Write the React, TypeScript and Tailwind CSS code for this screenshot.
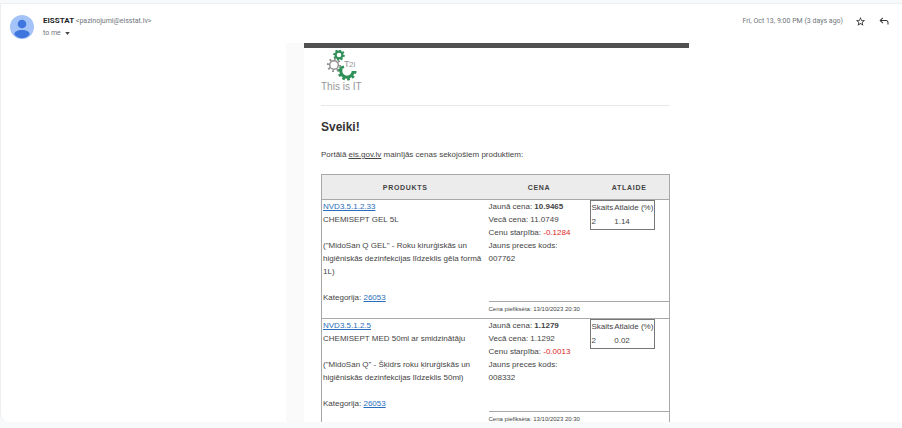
import type { ReactNode } from "react";

type Product = {
  code: string;
  name: string;
  description: string;
  category: string;
  newPrice: string;
  oldPrice: string;
  diff: string;
  itemCode: string;
  discount: string;
};

const products: Product[] = [
  {
    code: "NVD3.5.1.2.33",
    name: "CHEMISEPT GEL 5L",
    description: '("MidoSan Q GEL" - Roku ķirurģiskās un higiēniskās dezinfekcijas līdzeklis gēla formā 1L)',
    category: "26053",
    newPrice: "10.9465",
    oldPrice: "11.0749",
    diff: "-0.1284",
    itemCode: "007762",
    discount: "1.14",
  },
  {
    code: "NVD3.5.1.2.5",
    name: "CHEMISEPT MED 50ml ar smidzinātāju",
    description: '("MidoSan Q" - Šķidrs roku ķirurģiskās un higiēniskās dezinfekcijas līdzeklis 50ml)',
    category: "26053",
    newPrice: "1.1279",
    oldPrice: "1.1292",
    diff: "-0.0013",
    itemCode: "008332",
    discount: "0.02",
  },
];

function Avatar() {
  return (
    <svg viewBox="0 0 24 24" className="size-6 shrink-0" aria-hidden="true">
      <circle cx="12" cy="12" r="12" fill="#a4c3f8" />
      <circle cx="12" cy="9" r="4.3" fill="#3f76dd" />
      <path d="M4.3 19.4c0-2.8 3.2-4.5 7.7-4.5s7.7 1.7 7.7 4.5c-1.9 2.4-4.7 3.8-7.7 3.8s-5.8-1.4-7.7-3.8z" fill="#3f76dd" />
    </svg>
  );
}

function Logo() {
  return (
    <svg viewBox="0 0 42 42" className="block h-[42px] w-[42px]" role="img" aria-label="T2i This is IT">
      <g fill="none" stroke="#2f9058">
        <circle cx="18" cy="5" r="3.4" strokeWidth="2.2" />
        <circle cx="18" cy="5" r="4.9" strokeWidth="1.8" pathLength="160" strokeDasharray="11 9" />
        {/* open gear, lower part only */}
        <circle cx="26" cy="21" r="6.2" strokeWidth="3" pathLength="360" strokeDasharray="205 155" />
        <circle cx="26" cy="21" r="8.2" strokeWidth="2.6" pathLength="360" strokeDasharray="19 16 19 16 19 16 19 16 19 16 19 166" />
        <path d="M18.5 18.2l4.5-1.4" strokeWidth="2.6" />
      </g>
      <g fill="none" stroke="#919191">
        <circle cx="13" cy="15" r="4.3" strokeWidth="1.5" />
        <circle cx="13" cy="15" r="6" strokeWidth="2.2" pathLength="160" strokeDasharray="8 12" />
      </g>
      <g fill="#979797" fontFamily="'Liberation Sans', Arial, sans-serif">
        <text x="23" y="17" fontSize="9">T</text>
        <text x="28" y="17" fontSize="8">2i</text>
        <text x="0" y="40" fontSize="10">This is IT</text>
      </g>
    </svg>
  );
}

function MailLink({ children }: { children: ReactNode }) {
  return (
    <a href="#" className="text-[#2a6ebb] underline">
      {children}
    </a>
  );
}

function MessageHeader() {
  return (
    <header className="flex items-start gap-[9px] pt-[11px] pr-3 pl-[9px] font-['Roboto',sans-serif] text-[#70757a]">
      <Avatar />
      <div className="flex-1 text-[7px] leading-3">
        <div>
          <span className="text-[8px] font-bold text-[#1f1f1f]">EISSTAT</span>{" "}
          <span>&lt;pazinojumi@eisstat.lv&gt;</span>
        </div>
        <button type="button" className="flex items-center gap-1">
          to me
          <svg viewBox="0 0 6 4" className="h-[3px] w-[5px] fill-[#444746]" aria-hidden="true">
            <path d="M0 0h6L3 4z" />
          </svg>
        </button>
      </div>
      <div className="flex items-center text-[7px] leading-3">
        <span>Fri, Oct 13, 9:00 PM (3 days ago)</span>
        <button type="button" aria-label="Star" className="ml-3">
          <svg viewBox="0 0 24 24" className="size-[11px] fill-[#333333]">
            <path d="M22 9.240l-7.190-.620L12 2 9.190 8.630 2 9.240l5.460 4.730L5.820 21 12 17.270 18.180 21l-1.630-7.030L22 9.240zM12 15.400l-3.760 2.270 1-4.280-3.320-2.880 4.380-.380L12 6.100l1.710 4.040 4.380.380-3.320 2.880 1 4.280L12 15.400z" />
          </svg>
        </button>
        <button type="button" aria-label="Reply" className="ml-3">
          <svg viewBox="0 0 24 24" className="size-3 fill-[#333333]">
            <path d="M19 19v-4c0-1.660-1.340-3-3-3H6.830l3.590 3.590L9 17l-6-6 6-6 1.410 1.410L6.830 10H16c2.760 0 5 2.240 5 5v4h-2z" />
          </svg>
        </button>
      </div>
    </header>
  );
}

function ProductRows({ product }: { product: Product }) {
  return (
    <>
      <tr className="border-t border-[#a8a8a8]">
        <td rowSpan={2} className="px-px pb-[14px] align-top">
          <MailLink>{product.code}</MailLink>
          <div>{product.name}</div>
          <p className="mt-[13px]">{product.description}</p>
          <p className="mt-[13px]">
            Kategorija: <MailLink>{product.category}</MailLink>
          </p>
        </td>
        <td className="pb-[27px] align-top">
          <div>
            Jaunā cena: <b>{product.newPrice}</b>
          </div>
          <div>Vecā cena: {product.oldPrice}</div>
          <div>
            Cenu starpība: <span className="text-[#dc2626]">{product.diff}</span>
          </div>
          <div>
            Jauns preces kods:
            <br />
            {product.itemCode}
          </div>
        </td>
        <td className="px-px align-top">
          <table className="border border-[#777777] leading-[14px]">
            <thead>
              <tr>
                <th scope="col" className="pr-px text-left font-normal">Skaits</th>
                <th scope="col" className="pr-px text-left font-normal">Atlaide (%)</th>
              </tr>
            </thead>
            <tbody>
              <tr>
                <td>2</td>
                <td>{product.discount}</td>
              </tr>
            </tbody>
          </table>
        </td>
      </tr>
      <tr className="h-[17px]">
        <td colSpan={2} className="border-t border-[#a8a8a8] pb-px text-[6px]">
          Cena piefiksēta: 13/10/2023 20:30
        </td>
      </tr>
    </>
  );
}

export default function App() {
  return (
    <div className="flex h-screen flex-col bg-[#f8f9fb] pt-[3px] pb-[6px]">
      <main className="flex-1 overflow-hidden rounded-bl-lg border-t border-l border-[#eeeff1] bg-white">
        <MessageHeader />
        <div className="mt-1 ml-[285px] max-w-[403px] bg-[#fafafa] pl-[18px]">
          <article className="border-t-[5px] border-[#505050] bg-white pt-[2px] pr-[19px] pl-[17px] font-['Liberation_Sans',Arial,sans-serif] text-[8px] leading-[13px] text-[#444444]">
            <Logo />
            <hr className="mt-[13px] border-[#e8e8e8]" />
            <h1 className="mt-[13px] text-[12px] leading-4 font-bold text-[#333333]">Sveiki!</h1>
            <p className="mt-[13px]">
              Portālā <a href="#" className="underline">eis.gov.lv</a> mainījās cenas sekojošiem produktiem:
            </p>
            <table className="mt-[13px] w-full table-fixed border border-[#a8a8a8]">
              <colgroup>
                <col className="w-[48%]" />
                <col className="w-[29%]" />
                <col className="w-[23%]" />
              </colgroup>
              <thead>
                <tr className="h-[25px] bg-[#ececec] text-[7px] tracking-widest">
                  <th scope="col">PRODUKTS</th>
                  <th scope="col">CENA</th>
                  <th scope="col">ATLAIDE</th>
                </tr>
              </thead>
              <tbody>
                {products.map((p) => (
                  <ProductRows key={p.code} product={p} />
                ))}
              </tbody>
            </table>
          </article>
        </div>
      </main>
    </div>
  );
}
